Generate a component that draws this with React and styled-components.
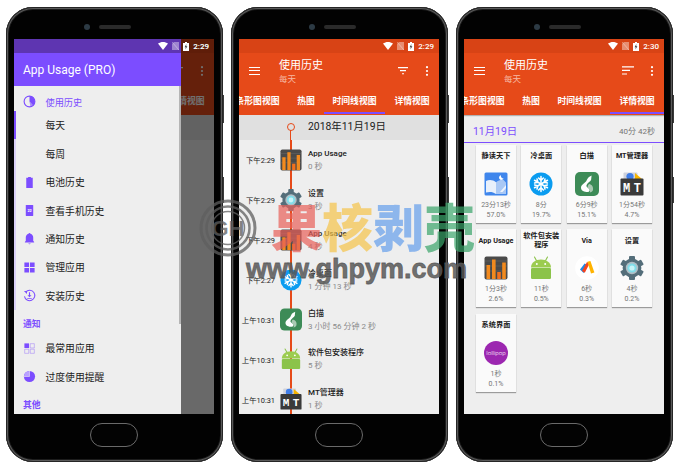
import React from 'react'
import styled, { createGlobalStyle } from 'styled-components'

const PURPLE = '#7c4dff'
const ORANGE = '#e64a19'
const FONT = 'Roboto, "Noto Sans CJK SC", sans-serif'

const Global = createGlobalStyle`
html, body { margin: 0; padding: 0; background: #fff; }
body { font-family: ${FONT}; overflow: hidden; }
* { box-sizing: border-box; }
`

/* ---------- app icons ---------- */
const teeth = [0, 60, 120, 180, 240, 300]
const flake = [0, 60, 120]

const AppIcon = ({ kind, size = 22 }) => {
    const props = { width: size, height: size, viewBox: '0 0 24 24', style: { display: 'block', position: 'relative' } }
    if (kind === 'usage') return (
        <svg {...props}>
            <rect x="0.5" y="0.5" width="23" height="23" rx="2" fill="#4a4a4a" />
            <path d="M1 5h22M1 10h22M1 15h22" stroke="#666" strokeWidth="0.6" />
            <rect x="2.5" y="9" width="3.6" height="14" fill="#f28a1e" />
            <rect x="8" y="3.5" width="3.6" height="19.5" fill="#f28a1e" />
            <rect x="13.2" y="16" width="3.6" height="7" fill="#f2711e" />
            <rect x="18.2" y="6.5" width="3.6" height="16.5" fill="#f28a1e" />
        </svg>
    )
    if (kind === 'gear') return (
        <svg {...props}>
            {teeth.map((a) => <rect key={a} x="9" y="0" width="6" height="6" rx="1" fill="#546e7a" transform={`rotate(${a} 12 12)`} />)}
            <circle cx="12" cy="12" r="9.4" fill="#546e7a" />
            <circle cx="12" cy="12" r="6.2" fill="#b0bec5" />
            <circle cx="12" cy="12" r="4.6" fill="#80deea" />
            <circle cx="12" cy="12" r="2.6" fill="#c8f4f8" />
        </svg>
    )
    if (kind === 'snow') return (
        <svg {...props}>
            <circle cx="12" cy="12" r="11.5" fill="#0a9cf0" />
            {flake.map((a) => (
                <g key={a} transform={`rotate(${a} 12 12)`} stroke="#fff" strokeWidth="1.5" fill="none" strokeLinecap="round">
                    <path d="M12 4.5v15M9.6 6l2.4 2.4L14.4 6M9.6 18l2.4-2.4 2.4 2.4" />
                </g>
            ))}
        </svg>
    )
    if (kind === 'baimiao') return (
        <svg {...props}>
            <rect x="0" y="0" width="24" height="24" rx="5" fill="#3d8b57" />
            <path d="M14 5l2.6-1.5-.4 3.6c.3 2-3.6 3.6-4.6 6-.8 2 1.4 2.6 2.6 3.6 1 1 .6 3.3-1.6 3.3-3.2 0-6.6-1.2-6.6-4.2 0-3.2 3.4-4.2 5.2-6.6 1-1.4 1.2-3.2 2.8-4.2z" fill="#fff" />
            <path d="M14 12c3 .6 4.6 3 4 6-.3 1.6-2 2.4-3.4 2.6 1.4-2-.4-3.4-1.6-4.6-.8-1.2 0-3 1-4z" fill="#a9c9b2" />
        </svg>
    )
    if (kind === 'android') return (
        <svg {...props}>
            <path d="M5.5 1l2.2 4M18.5 1l-2.2 4" stroke="#8bc34a" strokeWidth="1.1" strokeLinecap="round" />
            <path d="M2 11.5C2 6.5 6.5 3.5 12 3.5s10 3 10 8z" fill="#9ccc50" />
            <rect x="2" y="12" width="20" height="11" rx="1.2" fill="#8bc34a" />
            <circle cx="7.8" cy="8" r="1" fill="#fff" />
            <circle cx="16.2" cy="8" r="1" fill="#fff" />
        </svg>
    )
    if (kind === 'mt') return (
        <svg {...props}>
            <rect x="3.5" y="0.5" width="14" height="8" rx="1" fill="#cfd2dc" />
            <circle cx="10" cy="4.5" r="3.6" fill="#3f7de8" />
            <path d="M15 1l7 6h-7z" fill="#f7b500" />
            <rect x="0.5" y="6.5" width="23" height="17" rx="1" fill="#3a3a3a" />
            <text x="6.6" y="20" fontSize="12" fontFamily='"Liberation Mono", monospace' fontWeight="700" fill="#fff" textAnchor="middle">M</text>
            <text x="17.4" y="20" fontSize="12" fontFamily='"Liberation Mono", monospace' fontWeight="700" fill="#fff" textAnchor="middle">T</text>
        </svg>
    )
    if (kind === 'book') return (
        <svg {...props}>
            <rect x="0.5" y="0.5" width="23" height="23" rx="1.5" fill="#3f86ec" />
            <path d="M17 3.2a2.4 2.4 0 1 0 2.6 3.4 2.6 2.6 0 0 1-2.6-3.4z" fill="#fff" />
            <path d="M2 9c3-1.6 7-1.4 10 1.2V22c-3-2.4-7-2.6-10-1.4z" fill="#e8f0fb" />
            <path d="M12 10.2c2.4-2 5-2.6 7-2.8l3 3V22H12z" fill="#a9c8f5" />
            <path d="M16 20l6-7v3l-3.5 4z" fill="#fff" opacity="0.8" />
        </svg>
    )
    if (kind === 'via') return (
        <svg {...props}>
            <circle cx="12" cy="12" r="11.8" fill="#fff" />
            <path d="M5 13.5l3.6 3.5 4-8-3-1.6z" fill="#1e88e5" />
            <path d="M7 15l5-9 2.6 1.4-4.8 9.4z" fill="#f4431f" />
            <path d="M12.4 5.8l3-.8 4 11.4-3.4 1z" fill="#ffb300" />
        </svg>
    )
    if (kind === 'lollipop') return (
        <svg {...props}>
            <circle cx="12" cy="12" r="12" fill="#9c27b0" />
            <text x="12" y="14" fontSize="6.2" fontFamily="Roboto, sans-serif" fontWeight="300" fill="#fff" textAnchor="middle">lollipop</text>
        </svg>
    )
    return null
}

/* ---------- drawer icons ---------- */
const DrawerIcon = ({ kind }) => {
    const p = { width: 13, height: 13, viewBox: '0 0 14 14', fill: PURPLE }
    if (kind === 'pie') return (
        <svg {...p}>
            <circle cx="7" cy="7" r="5.8" fill="none" stroke={PURPLE} strokeWidth="1.2" />
            <path d="M7 1.2A5.8 5.8 0 0 1 11 11.2L7 7z" />
            <path d="M7 7l4 4.2a5.8 5.8 0 0 1-3 1.4z" opacity="0.6" />
        </svg>
    )
    if (kind === 'battery') return <svg {...p}><path d="M5.5 1h3v1H10.5v11h-7V2h2z" /></svg>
    if (kind === 'calendar') return (
        <svg {...p}>
            <rect x="3" y="1" width="8" height="12" rx="0.6" />
            <text x="7" y="9" fontSize="4" fontWeight="700" fill="#fff" textAnchor="middle" fontFamily="Roboto, sans-serif">22</text>
        </svg>
    )
    if (kind === 'bell') return <svg {...p}><path d="M7 1a1 1 0 0 1 1 1c2 .5 3 2.2 3 4v3.5l1 1.2v.5H2v-.5l1-1.2V6c0-1.8 1-3.5 3-4a1 1 0 0 1 1-1zM5.7 12.4h2.6A1.4 1.4 0 0 1 5.7 12.4z" /></svg>
    if (kind === 'apps') return <svg {...p}><path d="M1.5 1.5h5v5h-5zM7.5 1.5h5v5h-5zM1.5 7.5h5v5h-5zM7.5 7.5h5v5h-5z" /></svg>
    if (kind === 'install') return (
        <svg {...p}>
            <path d="M3 3.2A5.6 5.6 0 1 1 1.6 8" fill="none" stroke={PURPLE} strokeWidth="1.1" />
            <path d="M1 2.2l3.4 0-.2 3.2zM6.4 3.6h1.2v3h1.6L7 8.8 4.8 6.6h1.6zM4.6 9.6h4.8v1H4.6z" />
        </svg>
    )
    if (kind === 'top') return (
        <svg {...p}>
            <path d="M1.5 1.5h5v5h-5z" />
            <path d="M7.8 1.8h4.4v4.6H7.8zM1.8 7.8h4.4v4.4H1.8zM7.8 7.8h4.4v4.4H7.8z" fill="none" stroke={PURPLE} strokeWidth="0.7" opacity="0.55" />
        </svg>
    )
    if (kind === 'over') return (
        <svg {...p}>
            <circle cx="7" cy="7" r="6" />
            <path d="M7 7V1a6 6 0 0 0-6 6z" fill="#b9a1ff" />
            <path d="M7 .8v6.2H1" fill="none" stroke="#eee" strokeWidth="0.6" />
        </svg>
    )
    return null
}

/* ---------- status bar ---------- */
const Status = styled.div`
display: flex;
align-items: center;
justify-content: flex-end;
gap: 4px;
height: 14px;
padding-right: 5px;
background: ${(p) => p.$bg};
color: #fff;
font-size: 8px;
font-weight: 500;
svg { display: block; }
`
const StatusLayer = styled.div`
position: absolute;
top: 0;
left: 0;
right: 0;
z-index: 4;
`
const StatusBar = ({ time, bg = '#d84315' }) => (
    <Status $bg={bg}>
        <svg width="10" height="8" viewBox="0 0 10 8"><path d="M0 1.6C2.8-.5 7.2-.5 10 1.6L5 8z" fill="#fff" /></svg>
        <svg width="7" height="8" viewBox="0 0 7 8"><path d="M2 0h5v8H0V2z" fill="#fff" opacity="0.4" /><path d="M0 0l7 8" stroke="#fff" strokeWidth="0.6" opacity="0.6" /></svg>
        <svg width="6" height="9" viewBox="0 0 6 9"><path d="M2 0h2v1h2v8H0V1h2z" fill="#fff" /><path d="M3.4 2L1.6 5.2h1.2L2.4 7.4l2-3.2H3.2z" fill="#444" /></svg>
        <span>{time}</span>
    </Status>
)

/* ---------- app bar ---------- */
const Bar = styled.div`
background: ${ORANGE};
color: #fff;
box-shadow: 0 1px 1px rgba(0,0,0,.25);
position: relative;
`
const BarRow = styled.div`
display: flex;
align-items: center;
height: 35px;
padding: 0 10px 0 10px;
`
const Burger = styled.div`
width: 11px;
height: 8px;
margin-right: 19px;
border-top: 1.3px solid #fff;
border-bottom: 1.3px solid #fff;
position: relative;
&::after {
    content: "";
    position: absolute;
    left: 0;
    right: 0;
    top: 2.1px;
    height: 1.3px;
    background: #fff;
}
`
const Titles = styled.div`
flex: 1;
margin-top: 2px;
`
const Title = styled.div`
font-size: 11px;
line-height: 15px;
`
const Sub = styled.div`
font-size: 8.5px;
line-height: 12px;
color: #f6b9a4;
`
const Actions = styled.div`
display: flex;
align-items: center;
gap: 16px;
svg { display: block; }
`
const Strip = styled.div`
display: flex;
height: 27px;
margin-left: -12px;
overflow: visible;
`
const Tab = styled.div`
flex: none;
width: ${(p) => p.$w}px;
height: 26px;
display: flex;
align-items: center;
justify-content: center;
font-size: 8.8px;
font-weight: 700;
white-space: nowrap;
border-bottom: 2px solid ${(p) => (p.$on ? PURPLE : 'transparent')};
`
const tabs = [['条形图视图', 61], ['热图', 36], ['时间线视图', 61], ['详情视图', 54]]

const FilterIcon = () => <svg width="12" height="8" viewBox="0 0 12 8"><path d="M1 .6h10M3 3.6h6M5 6.8h2" stroke="#fff" strokeWidth="1.1" /></svg>
const SortIcon = () => <svg width="12" height="9" viewBox="0 0 12 9"><path d="M0 .8h12M0 4.4h8M0 8h5" stroke="#fff" strokeWidth="1.2" /></svg>
const Kebab = () => <svg width="4" height="10" viewBox="0 0 4 10"><circle cx="2" cy="1.2" r="1.1" fill="#fff" /><circle cx="2" cy="5" r="1.1" fill="#fff" /><circle cx="2" cy="8.8" r="1.1" fill="#fff" /></svg>

const AppBar = ({ active, action, time }) => (
    <>
        <StatusBar time={time} />
        <Bar>
            <BarRow>
                <Burger />
                <Titles>
                    <Title>使用历史</Title>
                    <Sub>每天</Sub>
                </Titles>
                <Actions>{action}<Kebab /></Actions>
            </BarRow>
            <Strip>
                {tabs.map(([t, w], i) => <Tab key={t} $w={w} $on={i === active}>{t}</Tab>)}
            </Strip>
        </Bar>
    </>
)

/* ---------- timeline ---------- */
const DateRow = styled.div`
position: relative;
height: 25px;
background: #e0e0e0;
padding-left: 69px;
font-size: 10.4px;
line-height: 24px;
color: #212121;
`
const Dot = styled.i`
position: absolute;
left: 48px;
top: 8px;
width: 8px;
height: 8px;
border-radius: 50%;
border: 1.3px solid ${ORANGE};
background: #e0e0e0;
&::after {
    content: "";
    position: absolute;
    left: 1.9px;
    top: 6px;
    width: 1.2px;
    height: 12px;
    background: ${ORANGE};
}
`
const Row = styled.div`
display: flex;
align-items: center;
height: 39.9px;
background: #eeeeee;
`
const Time = styled.div`
width: 36px;
text-align: right;
font-size: 7.4px;
color: #212121;
white-space: nowrap;
`
const IconCell = styled.div`
position: relative;
width: 22px;
height: 100%;
margin: 0 6px 0 5px;
display: flex;
align-items: center;
justify-content: center;
&::before {
    content: "";
    position: absolute;
    left: 10.4px;
    top: 0;
    bottom: 0;
    width: 1.2px;
    background: ${ORANGE};
}
`
const Name = styled.div`
font-size: 8px;
line-height: 13px;
font-weight: 500;
color: #212121;
white-space: nowrap;
`
const Spent = styled.div`
font-size: 8px;
line-height: 13px;
color: #8a8a8a;
white-space: nowrap;
`
const rows = [
    ['下午2:29', 'usage', 'App Usage', '0 秒'],
    ['下午2:29', 'gear', '设置', '3 秒'],
    ['下午2:29', 'usage', 'App Usage', '4 秒'],
    ['下午2:27', 'snow', '冷桌面', '1 分钟 13 秒'],
    ['上午10:31', 'baimiao', '白描', '3 小时 56 分钟 2 秒'],
    ['上午10:31', 'android', '软件包安装程序', '5 秒'],
    ['上午10:31', 'mt', 'MT管理器', '1 秒'],
]
const Timeline = () => (
    <>
        <AppBar active={2} action={<FilterIcon />} time="2:29" />
        <DateRow><Dot />2018年11月19日</DateRow>
        {rows.map((r, i) => (
            <Row key={i}>
                <Time>{r[0]}</Time>
                <IconCell><AppIcon kind={r[1]} size={r[1] === 'baimiao' ? 25 : 22} /></IconCell>
                <div>
                    <Name>{r[2]}</Name>
                    <Spent>{r[3]}</Spent>
                </div>
            </Row>
        ))}
    </>
)

/* ---------- details ---------- */
const DetailHead = styled.div`
display: flex;
align-items: center;
justify-content: space-between;
height: 28px;
padding: 4px 9px 0;
border-bottom: 1px solid ${PURPLE};
`
const HeadDate = styled.span`
font-size: 10.4px;
color: ${PURPLE};
`
const HeadTotal = styled.span`
font-size: 8px;
color: #757575;
`
const Cards = styled.div`
display: grid;
grid-template-columns: repeat(4, 40px);
grid-auto-rows: 78px;
column-gap: 5.33px;
row-gap: 6.3px;
padding: 2px 12px;
`
const Card = styled.div`
display: flex;
flex-direction: column;
align-items: center;
background: #fafafa;
box-shadow: 0 1px 1px rgba(0,0,0,.35);
`
const CardName = styled.div`
height: 22px;
padding: 1px 1px 0;
display: flex;
align-items: center;
text-align: center;
font-size: 7.2px;
line-height: 8.5px;
font-weight: 700;
color: #212121;
margin-bottom: 5px;
`
const CardValue = styled.div`
margin-top: ${(p) => (p.$first ? 4 : 0)}px;
font-size: 7px;
line-height: 10px;
color: #757575;
white-space: nowrap;
`
const cards = [
    ['静读天下', 'book', '23分13秒', '57.0%'],
    ['冷桌面', 'snow', '8分', '19.7%'],
    ['白描', 'baimiao', '6分9秒', '15.1%'],
    ['MT管理器', 'mt', '1分54秒', '4.7%'],
    ['App Usage', 'usage', '1分3秒', '2.6%'],
    ['软件包安装程序', 'android', '11秒', '0.5%'],
    ['Via', 'via', '6秒', '0.3%'],
    ['设置', 'gear', '4秒', '0.2%'],
    ['系统界面', 'lollipop', '1秒', '0.1%'],
]
const Details = () => (
    <>
        <AppBar active={3} action={<SortIcon />} time="2:30" />
        <DetailHead>
            <HeadDate>11月19日</HeadDate>
            <HeadTotal>40分 42秒</HeadTotal>
        </DetailHead>
        <Cards>
            {cards.map((c) => (
                <Card key={c[0]}>
                    <CardName>{c[0]}</CardName>
                    <AppIcon kind={c[1]} size={24} />
                    <CardValue $first>{c[2]}</CardValue>
                    <CardValue>{c[3]}</CardValue>
                </Card>
            ))}
        </Cards>
    </>
)

/* ---------- drawer ---------- */
const Scrim = styled.div`
position: absolute;
inset: 0;
background: rgba(0,0,0,.56);
z-index: 2;
`
const Drawer = styled.div`
position: absolute;
top: 0;
left: 0;
bottom: 0;
width: 167px;
background: #eeeeee;
overflow: hidden;
z-index: 3;
`
const DrawerStatus = styled.div`
height: 14px;
background: #5e35b1;
`
const DrawerHead = styled.div`
height: 33px;
padding-left: 9px;
display: flex;
align-items: center;
background: ${PURPLE};
color: #fff;
font-size: 12px;
`
const Scroller = styled.div`
position: absolute;
top: 47px;
right: 0;
width: 2px;
height: 238px;
background: #b5b5b5;
`
const Item = styled.div`
display: flex;
align-items: center;
height: ${(p) => (p.$head ? 25 : 28.45)}px;
padding-top: ${(p) => (p.$head ? 6 : 0)}px;
padding-left: ${(p) => (p.$rail ? 7 : 9)}px;
border-left: ${(p) => (p.$rail ? `2px solid ${p.$rail}` : '0')};
font-size: ${(p) => (p.$head ? 9.2 : 9.8)}px;
color: ${(p) => (p.$head ? PURPLE : '#212121')};
white-space: nowrap;
`
const ItemIcon = styled.span`
display: flex;
width: 13px;
margin-right: 9.5px;
`
const Section = styled.div`
height: 24px;
padding: 7px 0 0 9px;
font-size: 8.8px;
line-height: 15px;
font-weight: 700;
color: ${PURPLE};
`
const LAV = '#d9d0f6'
const menu = [
    { icon: 'pie', text: '使用历史', head: true },
    { text: '每天', rail: PURPLE },
    { text: '每周', rail: LAV },
    { icon: 'battery', text: '电池历史', rail: LAV },
    { icon: 'calendar', text: '查看手机历史', rail: LAV },
    { icon: 'bell', text: '通知历史', rail: LAV },
    { icon: 'apps', text: '管理应用', rail: LAV },
    { icon: 'install', text: '安装历史', rail: LAV },
    { section: '通知' },
    { icon: 'top', text: '最常用应用' },
    { icon: 'over', text: '过度使用提醒' },
    { section: '其他' },
]
const DrawerPanel = () => (
    <Drawer>
        <DrawerStatus />
        <DrawerHead>App Usage (PRO)</DrawerHead>
        {menu.map((m, i) => (
            m.section
                ? <Section key={i}>{m.section}</Section>
                : (
                    <Item key={i} $head={m.head} $rail={m.rail}>
                        <ItemIcon>{m.icon && <DrawerIcon kind={m.icon} />}</ItemIcon>
                        {m.text}
                    </Item>
                )
        ))}
        <Scroller />
    </Drawer>
)

/* ---------- phone shell ---------- */
const Stage = styled.div`
position: relative;
width: 678px;
height: 472px;
display: flex;
gap: 8px;
padding: 7px 0 0 6px;
background: #fff;
overflow: hidden;
`
const Phone = styled.div`
position: relative;
flex: none;
width: 217px;
height: 455px;
padding: 0 9px 0 8px;
border-radius: 27px;
background: #020202;
box-shadow: inset 0 0 0 1px #262626, inset 0 0 0 2px #5a5a5a, inset 0 0 0 3px #1c1c1c;
display: flex;
flex-direction: column;
&::before, &::after {
    content: "";
    position: absolute;
    right: -1px;
    width: 1.5px;
    background: #3a3a3a;
}
&::before { top: 88px; height: 28px; }
&::after { top: 170px; height: 26px; }
`
const Top = styled.div`
height: 32px;
flex: none;
display: flex;
align-items: center;
justify-content: center;
gap: 9px;
padding: 8px 14px 0 0;
`
const Camera = styled.i`
width: 6px;
height: 6px;
border-radius: 50%;
background: #2c3a44;
`
const Speaker = styled.i`
width: 32px;
height: 4px;
border-radius: 2px;
background: #2a2a2a;
`
const Screen = styled.div`
position: relative;
flex: none;
width: 200px;
height: 375px;
background: #eeeeee;
overflow: hidden;
`
const Chin = styled.div`
flex: 1;
display: flex;
justify-content: center;
padding-top: 9px;
`
const Home = styled.div`
width: 48px;
height: 24px;
border-radius: 12px;
border: 1.3px solid #6a6a6a;
background: #030303;
`

const PhoneBody = ({ children }) => (
    <Phone>
        <Top><Camera /><Speaker /></Top>
        <Screen>{children}</Screen>
        <Chin><Home /></Chin>
    </Phone>
)

/* ---------- watermark ---------- */
const Badge = styled.svg`
position: absolute;
left: 199px;
top: 199px;
opacity: 0.75;
z-index: 5;
`
const Brand = styled.div`
position: absolute;
left: 271px;
top: 190px;
display: flex;
font-family: "Noto Sans CJK SC", sans-serif;
font-weight: 900;
font-size: 51px;
line-height: 70px;
z-index: 5;
`
const BrandChar = styled.span`
color: ${(p) => p.$c};
opacity: 0.7;
`
const Site = styled.div`
position: absolute;
left: 246px;
top: 253px;
font-family: "Liberation Sans", sans-serif;
font-weight: 700;
font-size: 27px;
line-height: 32px;
color: rgba(88,88,88,.85);
-webkit-text-stroke: 0.8px rgba(88,88,88,.85);
white-space: nowrap;
z-index: 5;
`
const brand = [['果', '#e9605a'], ['核', '#f6c44a'], ['剥', '#659fec'], ['壳', '#3aa56a']]

export default function App() {
    return (
        <Stage>
            <Global />
            <PhoneBody>
                <Timeline />
                <Scrim />
                <DrawerPanel />
                <StatusLayer><StatusBar time="2:29" bg="transparent" /></StatusLayer>
            </PhoneBody>
            <PhoneBody><Timeline /></PhoneBody>
            <PhoneBody><Details /></PhoneBody>

            <Badge width="58" height="58" viewBox="0 0 58 58" fill="none" stroke="#5f5f5f">
                <circle cx="29" cy="29" r="27" strokeWidth="3" />
                <circle cx="29" cy="29" r="21.5" strokeWidth="2.5" />
                <circle cx="29" cy="29" r="16.5" strokeWidth="1.5" />
                <text x="29" y="37" fontSize="22" fontWeight="700" fontFamily='"Liberation Sans", sans-serif' textAnchor="middle" fill="#5f5f5f" stroke="none">GH</text>
            </Badge>
            <Brand>
                {brand.map(([t, c]) => <BrandChar key={t} $c={c}>{t}</BrandChar>)}
            </Brand>
            <Site>www.ghpym.com</Site>
        </Stage>
    )
}
